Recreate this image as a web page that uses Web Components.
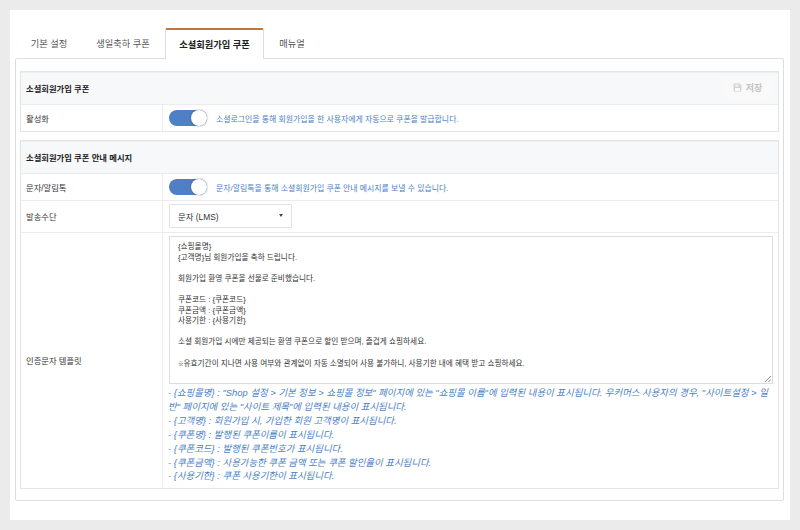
<!DOCTYPE html>
<html lang="ko">
<head>
<meta charset="utf-8">
<title>소셜회원가입 쿠폰</title>
<style>
  html, body { margin: 0; height: 100%; background: #ebebeb; overflow: hidden; }
  body {
    padding: 10px;
    box-sizing: border-box;
    font-family: "Liberation Sans", "Noto Sans CJK KR", sans-serif;
    color: #333;
    -webkit-font-smoothing: antialiased;
  }
  .mark { font-size: 5.5px; font-weight: 700; }
</style>
</head>
<body>
<settings-page>
  <tab-bar slot="tabs">
    <tab-item>기본 설정</tab-item>
    <tab-item style="--tab-w:84px">생일축하 쿠폰</tab-item>
    <tab-item active>소셜회원가입 쿠폰</tab-item>
    <tab-item style="--tab-w:56px">매뉴얼</tab-item>
  </tab-bar>

  <form-section heading="소셜회원가입 쿠폰" saveable>
    <form-row label="활성화" style="--row-h:26px">
      <toggle-switch>소셜로그인을 통해 회원가입을 한 사용자에게 자동으로 쿠폰을 발급합니다.</toggle-switch>
    </form-row>
  </form-section>

  <form-section heading="소셜회원가입 쿠폰 안내 메시지">
    <form-row label="문자/알림톡" style="--row-h:26px">
      <toggle-switch>문자/알림톡을 통해 소셜회원가입 쿠폰 안내 메시지를 보낼 수 있습니다.</toggle-switch>
    </form-row>
    <form-row label="발송수단" style="--row-h:31px">
      <select-box>문자 (LMS)</select-box>
    </form-row>
    <form-row label="인증문자 템플릿" style="--row-h:255px">
      <template-editor>
        <span slot="body">{쇼핑몰명}
{고객명}님 회원가입을 축하 드립니다.

회원가입 환영 쿠폰을 선물로 준비했습니다.

쿠폰코드 : {쿠폰코드}
쿠폰금액 : {쿠폰금액}
사용기한 : {사용기한}

소셜 회원가입 시에만 제공되는 환영 쿠폰으로 할인 받으며, 즐겁게 쇼핑하세요.

<span class="mark">※</span>유효기간이 지나면 사용 여부와 관계없이 자동 소멸되어 사용 불가하니, 사용기한 내에 혜택 받고 쇼핑하세요.</span>
        <div>- {쇼핑몰명} : "Shop 설정 &gt; 기본 정보 &gt; 쇼핑몰 정보" 페이지에 있는 "쇼핑몰 이름"에 입력된 내용이 표시됩니다. 우커머스 사용자의 경우, "사이트설정 &gt; 일반" 페이지에 있는 "사이트 제목"에 입력된 내용이 표시됩니다.</div>
        <div>- {고객명} : 회원가입 시, 가입한 회원 고객명이 표시됩니다.</div>
        <div>- {쿠폰명} : 발행된 쿠폰이름이 표시됩니다.</div>
        <div>- {쿠폰코드} : 발행된 쿠폰번호가 표시됩니다.</div>
        <div>- {쿠폰금액} : 사용가능한 쿠폰 금액 또는 쿠폰 할인율이 표시됩니다.</div>
        <div>- {사용기한} : 쿠폰 사용기한이 표시됩니다.</div>
      </template-editor>
    </form-row>
  </form-section>
</settings-page>

<script>
const define = (name, css, html, setup) => {
  customElements.define(name, class extends HTMLElement {
    constructor() {
      super();
      this.attachShadow({ mode: "open" }).innerHTML = `<style>${css}</style>${html}`;
      if (setup) setup(this);
    }
  });
};

define("settings-page", `
  :host { display: block; height: 510px; background: #fff; padding: 18px 6px 0 5px; box-sizing: border-box; }
  .panel { display: flex; flex-direction: column; gap: 8px; height: 443px; box-sizing: border-box;
    margin-top: -1px; padding: 12px 4px 0; border: 1px solid #ddd; border-radius: 2px; background: #fff; }
`, `<slot name="tabs"></slot><div class="panel"><slot></slot></div>`);

define("tab-bar", `
  :host { display: flex; position: relative; z-index: 1; height: 31px; padding-left: 2px; box-sizing: border-box; }
`, `<slot></slot>`);

define("tab-item", `
  :host { display: flex; align-items: center; justify-content: center; box-sizing: border-box;
    width: var(--tab-w, 64px); height: 31px; padding-bottom: 1px; font-size: 9.25px; color: #555; white-space: nowrap; }
  :host([active]) { width: 99px; background: #fff; color: #222; font-weight: 700;
    border: 1px solid #ddd; border-top: 2px solid #c0773f; border-bottom: 0; border-radius: 2px 2px 0 0; }
`, `<slot></slot>`);

define("form-section", `
  :host { display: block; border: 1px solid #e4e4e4; background: #fff; }
  header { display: flex; align-items: center; justify-content: space-between; height: 32px; box-sizing: border-box;
    padding: 0 6px 2px 5px; background: #f7f8f9; border-top: 1px solid #eee; font-size: 8.3px; font-weight: 700; color: #222; }
  button { display: none; align-items: center; gap: 4px; height: 24px; width: 47px; justify-content: center;
    margin-right: 1px; padding: 0; border: 0; border-radius: 2px; background: #f9f9f9; color: #c4c4c4;
    font: 700 9px "Liberation Sans", "Noto Sans CJK KR", sans-serif; }
  :host([saveable]) button { display: flex; }
  svg { width: 9px; height: 9px; }
`, `<header><span class="title"></span>
  <button type="button"><svg viewBox="0 0 16 16" fill="#d4d4d4"><path d="M1 1h11l3 3v11H1zM4 2.5V6h7V2.5zM8 3h2v2.5H8zM3.5 9v5h9V9z"/></svg>저장</button>
</header><slot></slot>`, el => {
  queueMicrotask(() => el.shadowRoot.querySelector(".title").textContent = el.getAttribute("heading"));
});

define("form-row", `
  :host { display: grid; grid-template-columns: 142px 1fr; min-height: var(--row-h, 27px); border-top: 1px solid #ececec; }
  .label { display: flex; align-items: center; padding: 0 0 1px 5px; border-right: 1px solid #ececec; font-size: 8.3px; color: #333; }
  .field { display: flex; align-items: center; padding-left: 6px; min-width: 0; }
`, `<div class="label"></div><div class="field"><slot></slot></div>`, el => {
  queueMicrotask(() => el.shadowRoot.querySelector(".label").textContent = el.getAttribute("label"));
});

define("toggle-switch", `
  :host { display: flex; align-items: center; gap: 9px; font-size: 7.9px; color: #4a7fc5; white-space: nowrap; }
  .track { position: relative; width: 38px; height: 16px; border-radius: 8px; background: #4f80c5; flex: none; }
  .knob { position: absolute; right: 0; top: 0; width: 16px; height: 16px; border-radius: 50%;
    background: #fff; box-shadow: 0 0 2px rgba(0,0,0,.45); }
`, `<div class="track"><div class="knob"></div></div><span><slot></slot></span>`);

define("select-box", `
  :host { display: flex; align-items: center; justify-content: space-between; box-sizing: border-box;
    width: 123px; height: 24px; margin-bottom: 2px; padding: 0 8px; border: 1px solid #e2e2e2; border-radius: 1px; background: #fff;
    font-size: 8.4px; color: #333; }
  i { width: 0; height: 0; border: 2.5px solid transparent; border-top: 3px solid #444; border-bottom: 0; }
`, `<span><slot></slot></span><i></i>`);

define("template-editor", `
  :host { display: block; flex: 1; min-width: 0; align-self: flex-start; padding: 3px 5px 0 0; }
  .area { position: relative; box-sizing: border-box; height: 148px; padding: 5px 8px; overflow: hidden;
    border: 1px solid #ddd; font-size: 7.65px; line-height: 10.6px; color: #333; white-space: pre-wrap; }
  svg { position: absolute; right: 1px; bottom: 1px; width: 7px; height: 7px; }
  .help { margin: 2px 0 0 -1px; font-size: 9.42px; line-height: 13.9px; font-style: italic; color: #4a7fc5; }
`, `<div class="area"><slot name="body"></slot>
  <svg viewBox="0 0 8 8" stroke="#777" fill="none"><path d="M1 8 8 1M5 8 8 5"/></svg></div>
  <div class="help"><slot></slot></div>`);
</script>
</body>
</html>
